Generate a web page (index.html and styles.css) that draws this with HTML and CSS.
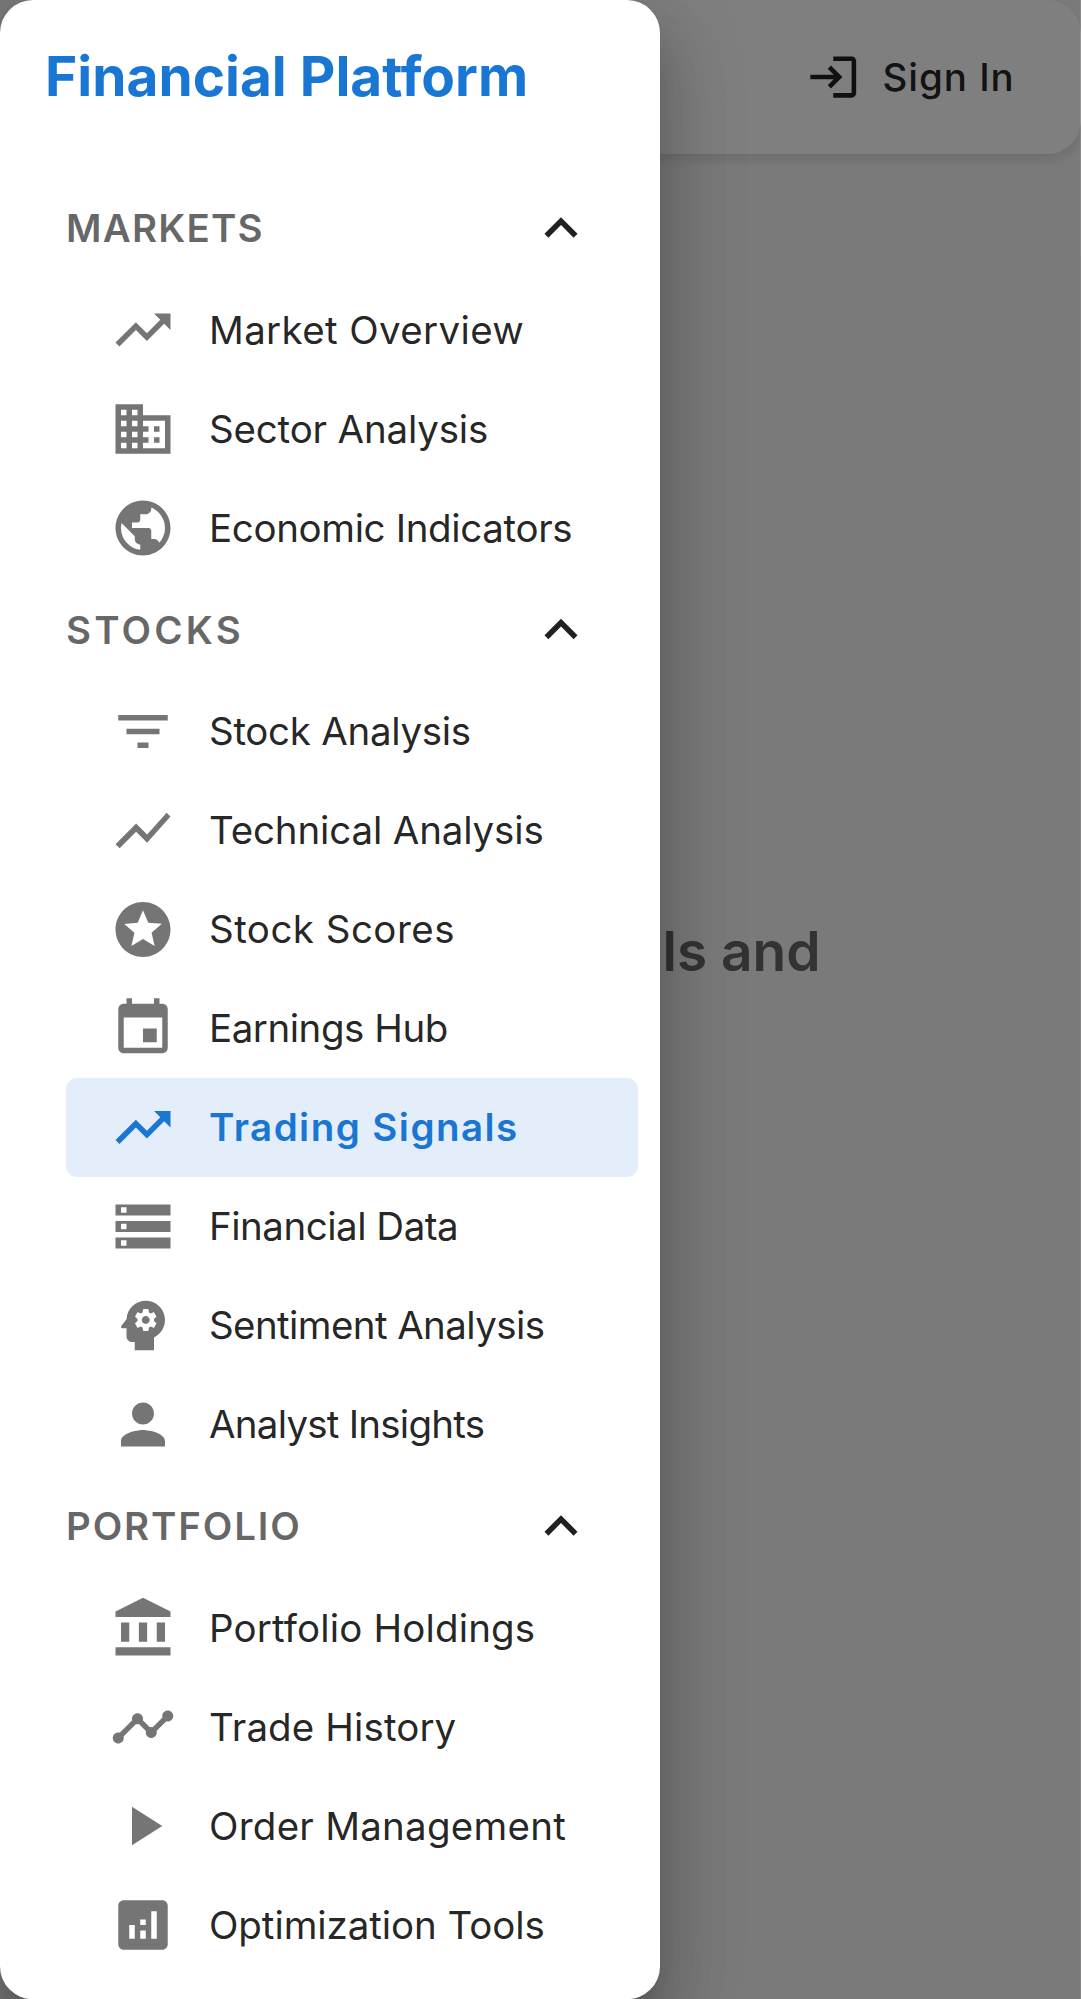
FILE: index.html
```html
<!DOCTYPE html>
<html lang="en">
<head>
<meta charset="utf-8">
<title>Financial Platform</title>
<link rel="stylesheet" href="styles.css">
</head>
<body>
<div class="app">
  <header class="appbar">
    <button class="signin">
      <svg class="signin-icon" viewBox="0 0 24 24"><path d="M11 7 9.6 8.4l2.6 2.6H2v2h10.2l-2.6 2.6L11 17l5-5zm9 12h-8v2h8c1.1 0 2-.9 2-2V5c0-1.1-.9-2-2-2h-8v2h8z"/></svg>
      <span>Sign In</span>
    </button>
  </header>
  <main class="content"><h2 class="headline">ls and</h2></main>
  <div class="backdrop"></div>
  <div class="edge"></div>
  <nav class="drawer">
    <div class="brand">Financial Platform</div>
    <div class="menu">
      <div class="section markets"><span>MARKETS</span><svg class="chevron" viewBox="0 0 24 24"><path d="m12 8-6 6 1.41 1.41L12 10.83l4.59 4.58L18 14z"/></svg></div>
      <a class="item overview"><svg class="icon" viewBox="0 0 24 24"><path d="m16 6 2.29 2.29-4.88 4.88-4-4L2 16.59 3.41 18l6-6 4 4 6.3-6.29L22 12V6z"/></svg><span>Market Overview</span></a>
      <a class="item sector"><svg class="icon" viewBox="0 0 24 24"><path d="M12 7V3H2v18h20V7zM6 19H4v-2h2zm0-4H4v-2h2zm0-4H4V9h2zm0-4H4V5h2zm4 12H8v-2h2zm0-4H8v-2h2zm0-4H8V9h2zm0-4H8V5h2zm10 12h-8v-2h2v-2h-2v-2h2v-2h-2V9h8zm-2-8h-2v2h2zm0 4h-2v2h2z"/></svg><span>Sector Analysis</span></a>
      <a class="item economic"><svg class="icon" viewBox="0 0 24 24"><path d="M12 2C6.48 2 2 6.48 2 12s4.48 10 10 10 10-4.48 10-10S17.52 2 12 2m-1 17.93c-3.95-.49-7-3.85-7-7.93 0-.62.08-1.21.21-1.79L9 15v1c0 1.1.9 2 2 2zm6.9-2.54c-.26-.81-1-1.39-1.9-1.39h-1v-3c0-.55-.45-1-1-1H8v-2h2c.55 0 1-.45 1-1V7h2c1.1 0 2-.9 2-2v-.41c2.93 1.19 5 4.06 5 7.41 0 2.08-.8 3.97-2.1 5.39"/></svg><span>Economic Indicators</span></a>
      <div class="section stocks"><span>STOCKS</span><svg class="chevron" viewBox="0 0 24 24"><path d="m12 8-6 6 1.41 1.41L12 10.83l4.59 4.58L18 14z"/></svg></div>
      <a class="item stock"><svg class="icon" viewBox="0 0 24 24"><path d="M10 18h4v-2h-4zM3 6v2h18V6zm3 7h12v-2H6z"/></svg><span>Stock Analysis</span></a>
      <a class="item technical"><svg class="icon" viewBox="0 0 24 24"><path d="m3.5 18.49 6-6.01 4 4L22 6.92l-1.41-1.41-7.09 7.97-4-4L2 16.99z"/></svg><span>Technical Analysis</span></a>
      <a class="item scores"><svg class="icon" viewBox="0 0 24 24"><path d="M11.99 2C6.47 2 2 6.48 2 12s4.47 10 9.99 10C17.52 22 22 17.52 22 12S17.52 2 11.99 2m4.24 16L12 15.45 7.77 18l1.12-4.81-3.73-3.23 4.92-.42L12 5l1.92 4.53 4.92.42-3.73 3.23z"/></svg><span>Stock Scores</span></a>
      <a class="item earnings"><svg class="icon" viewBox="0 0 24 24"><path d="M17 12h-5v5h5zM16 1v2H8V1H6v2H5c-1.11 0-1.99.9-1.99 2L3 19c0 1.1.89 2 2 2h14c1.1 0 2-.9 2-2V5c0-1.1-.9-2-2-2h-1V1zm3 18H5V8h14z"/></svg><span>Earnings Hub</span></a>
      <a class="item selected"><svg class="icon" viewBox="0 0 24 24"><path d="m16 6 2.29 2.29-4.88 4.88-4-4L2 16.59 3.41 18l6-6 4 4 6.3-6.29L22 12V6z"/></svg><span>Trading Signals</span></a>
      <a class="item financial"><svg class="icon" viewBox="0 0 24 24"><path d="M2 20h20v-4H2zm2-3h2v2H4zM2 4v4h20V4zm4 3H4V5h2zm-4 7h20v-4H2zm2-3h2v2H4z"/></svg><span>Financial Data</span></a>
      <a class="item sentiment"><svg class="icon" viewBox="0 0 24 24"><path d="M13 8.57c-.79 0-1.43.64-1.43 1.43s.64 1.43 1.43 1.43 1.43-.64 1.43-1.43-.64-1.43-1.43-1.43"/><path d="M13 3C9.25 3 6.2 5.94 6.02 9.64L4.1 12.2c-.25.33-.01.8.4.8H6v3c0 1.1.9 2 2 2h1v3h7v-4.68c2.36-1.12 4-3.53 4-6.32 0-3.87-3.13-7-7-7m3 7c0 .13-.01.26-.02.39l.83.66c.08.06.1.16.05.25l-.8 1.39c-.05.09-.16.12-.24.09l-.99-.4c-.21.16-.43.29-.67.39L14 13.83c-.01.1-.1.17-.2.17h-1.6c-.1 0-.18-.07-.2-.17l-.15-1.06c-.25-.1-.47-.23-.68-.39l-.99.4c-.09.03-.2 0-.25-.09l-.8-1.39c-.05-.08-.03-.19.05-.25l.84-.66c-.01-.13-.02-.26-.02-.39s.02-.27.04-.39l-.85-.66c-.08-.06-.1-.16-.05-.26l.8-1.38c.05-.09.15-.12.24-.09l1 .4c.2-.15.43-.29.67-.39L12 6.17c.02-.1.1-.17.2-.17h1.6c.1 0 .18.07.2.17l.15 1.06c.24.1.46.23.67.39l1-.4c.09-.03.2 0 .24.09l.8 1.38c.05.09.03.2-.05.26l-.85.66c.03.12.04.25.04.39"/></svg><span>Sentiment Analysis</span></a>
      <a class="item analyst"><svg class="icon" viewBox="0 0 24 24"><path d="M12 12c2.21 0 4-1.79 4-4s-1.79-4-4-4-4 1.79-4 4 1.79 4 4 4m0 2c-2.67 0-8 1.34-8 4v2h16v-2c0-2.66-5.33-4-8-4"/></svg><span>Analyst Insights</span></a>
      <div class="section portfolio"><span>PORTFOLIO</span><svg class="chevron" viewBox="0 0 24 24"><path d="m12 8-6 6 1.41 1.41L12 10.83l4.59 4.58L18 14z"/></svg></div>
      <a class="item holdings"><svg class="icon" viewBox="0 0 24 24"><path d="M4 10v7h3v-7zm6.5 0v7h3v-7zM2 22h20v-3H2zm15-12v7h3v-7zm-5-9L2 6v2h20V6z"/></svg><span>Portfolio Holdings</span></a>
      <a class="item history"><svg class="icon" viewBox="0 0 24 24"><path d="M23 8c0 1.1-.9 2-2 2-.18 0-.35-.02-.51-.07l-3.56 3.55c.05.16.07.34.07.52 0 1.1-.9 2-2 2s-2-.9-2-2c0-.18.02-.36.07-.52l-2.55-2.55c-.16.05-.34.07-.52.07s-.36-.02-.52-.07l-4.55 4.56c.05.16.07.33.07.51 0 1.1-.9 2-2 2s-2-.9-2-2 .9-2 2-2c.18 0 .35.02.51.07l4.56-4.55C8.02 9.36 8 9.18 8 9c0-1.1.9-2 2-2s2 .9 2 2c0 .18-.02.36-.07.52l2.55 2.55c.16-.05.34-.07.52-.07s.36.02.52.07l3.55-3.56C19.02 8.35 19 8.18 19 8c0-1.1.9-2 2-2s2 .9 2 2"/></svg><span>Trade History</span></a>
      <a class="item orders"><svg class="icon" viewBox="0 0 24 24"><path d="M8 5v14l11-7z"/></svg><span>Order Management</span></a>
      <a class="item tools"><svg class="icon" viewBox="0 0 24 24"><path d="M19 3H5c-1.1 0-2 .9-2 2v14c0 1.1.9 2 2 2h14c1.1 0 2-.9 2-2V5c0-1.1-.9-2-2-2M9 17H7v-5h2zm4 0h-2v-3h2zm0-5h-2v-2h2zm4 5h-2V7h2z"/></svg><span>Optimization Tools</span></a>
    </div>
  </nav>
</div>
</body>
</html>
```
FILE: styles.css
```css
* { box-sizing: border-box; }

html { overflow: hidden; }

body {
  margin: 0;
  height: 1999px;
  overflow: hidden;
  background: #7a7a7a;
}

/* A 393px wide phone layout, shown at 2.75 times its size. */
.app {
  position: relative;
  display: flex;
  flex-direction: column;
  width: 393px;
  height: 727px;
  transform: scale(2.75);
  transform-origin: 0 0;
  background: #f5f5f5;
  color: rgba(0, 0, 0, 0.87);
  font-family: Inter, "Liberation Sans", sans-serif;
  font-size: 14px;
}

.appbar {
  display: flex;
  justify-content: flex-end;
  align-items: center;
  height: 56px;
  padding: 0 16px;
  border-radius: 12px;
  background: #fff;
  box-shadow: 0 2px 4px rgba(0, 0, 0, 0.1);
}

.signin {
  display: flex;
  align-items: center;
  gap: 8px;
  padding: 6px 8px;
  border: 0;
  background: none;
  color: inherit;
  font: 500 14px/24px Inter, "Liberation Sans", sans-serif;
  letter-spacing: 0.35px;
}

.signin-icon { width: 20px; height: 20px; fill: currentColor; }

.content { padding: 274px 94.6px 0; }

.headline {
  margin: 0;
  color: #666;
  font-size: 20px;
  font-weight: 600;
  line-height: 32px;
  text-align: right;
}

.backdrop {
  position: absolute;
  inset: 0;
  background: rgba(0, 0, 0, 0.5);
}

.drawer {
  position: absolute;
  inset: 0 auto 0 0;
  width: 240px;
  overflow: hidden;
  border-radius: 12px;
  background: #fff;
  box-shadow:
    0 8px 10px -5px rgba(0, 0, 0, 0.2),
    0 16px 24px 2px rgba(0, 0, 0, 0.14),
    0 6px 30px 5px rgba(0, 0, 0, 0.12);
}

/* Scroll thumb at the window's right edge. */
.edge {
  position: absolute;
  top: 0;
  right: -0.1px;
  width: 0.37px;
  height: 93px;
  background: #9a9a9a;
}

.brand {
  display: flex;
  align-items: center;
  height: 56px;
  padding: 0 16px 1px 16.4px;
  color: #1976d2;
  font-size: 20px;
  font-weight: 700;
  white-space: nowrap;
}

.menu { padding: 8px 8px 0 24px; }

.section {
  display: flex;
  align-items: center;
  justify-content: space-between;
  height: 38px;
  padding-right: 16px;
  color: rgba(0, 0, 0, 0.6);
  font-weight: 600;
}

.section span,
.item span { padding-bottom: 2px; }

.chevron { width: 24px; height: 24px; fill: rgba(0, 0, 0, 0.87); }

.item {
  display: flex;
  align-items: center;
  gap: 12px;
  height: 36px;
  padding: 0 16px;
  border-radius: 4px;
  white-space: nowrap;
}

.icon { flex: none; width: 24px; height: 24px; fill: rgba(0, 0, 0, 0.54); }

.selected {
  background: rgba(25, 118, 210, 0.12);
  color: #1976d2;
  font-weight: 600;
  letter-spacing: 0.53px;
}

.selected .icon { fill: #1976d2; }

/* Tracking of each label */
.markets { letter-spacing: 0.43px; }
.stocks { letter-spacing: 1.15px; }
.portfolio { letter-spacing: 0.67px; }
.overview { letter-spacing: 0.132px; }
.sector { letter-spacing: -0.066px; }
.economic { letter-spacing: -0.129px; }
.stock { letter-spacing: -0.107px; }
.technical { letter-spacing: -0.055px; }
.scores { letter-spacing: 0.169px; }
.earnings { letter-spacing: -0.169px; }
.financial { letter-spacing: -0.178px; }
.sentiment { letter-spacing: -0.218px; }
.analyst { letter-spacing: -0.278px; }
.holdings { letter-spacing: 0.055px; }
.history { letter-spacing: 0.04px; }
.orders { letter-spacing: 0.093px; }
.tools { letter-spacing: -0.027px; }
```
